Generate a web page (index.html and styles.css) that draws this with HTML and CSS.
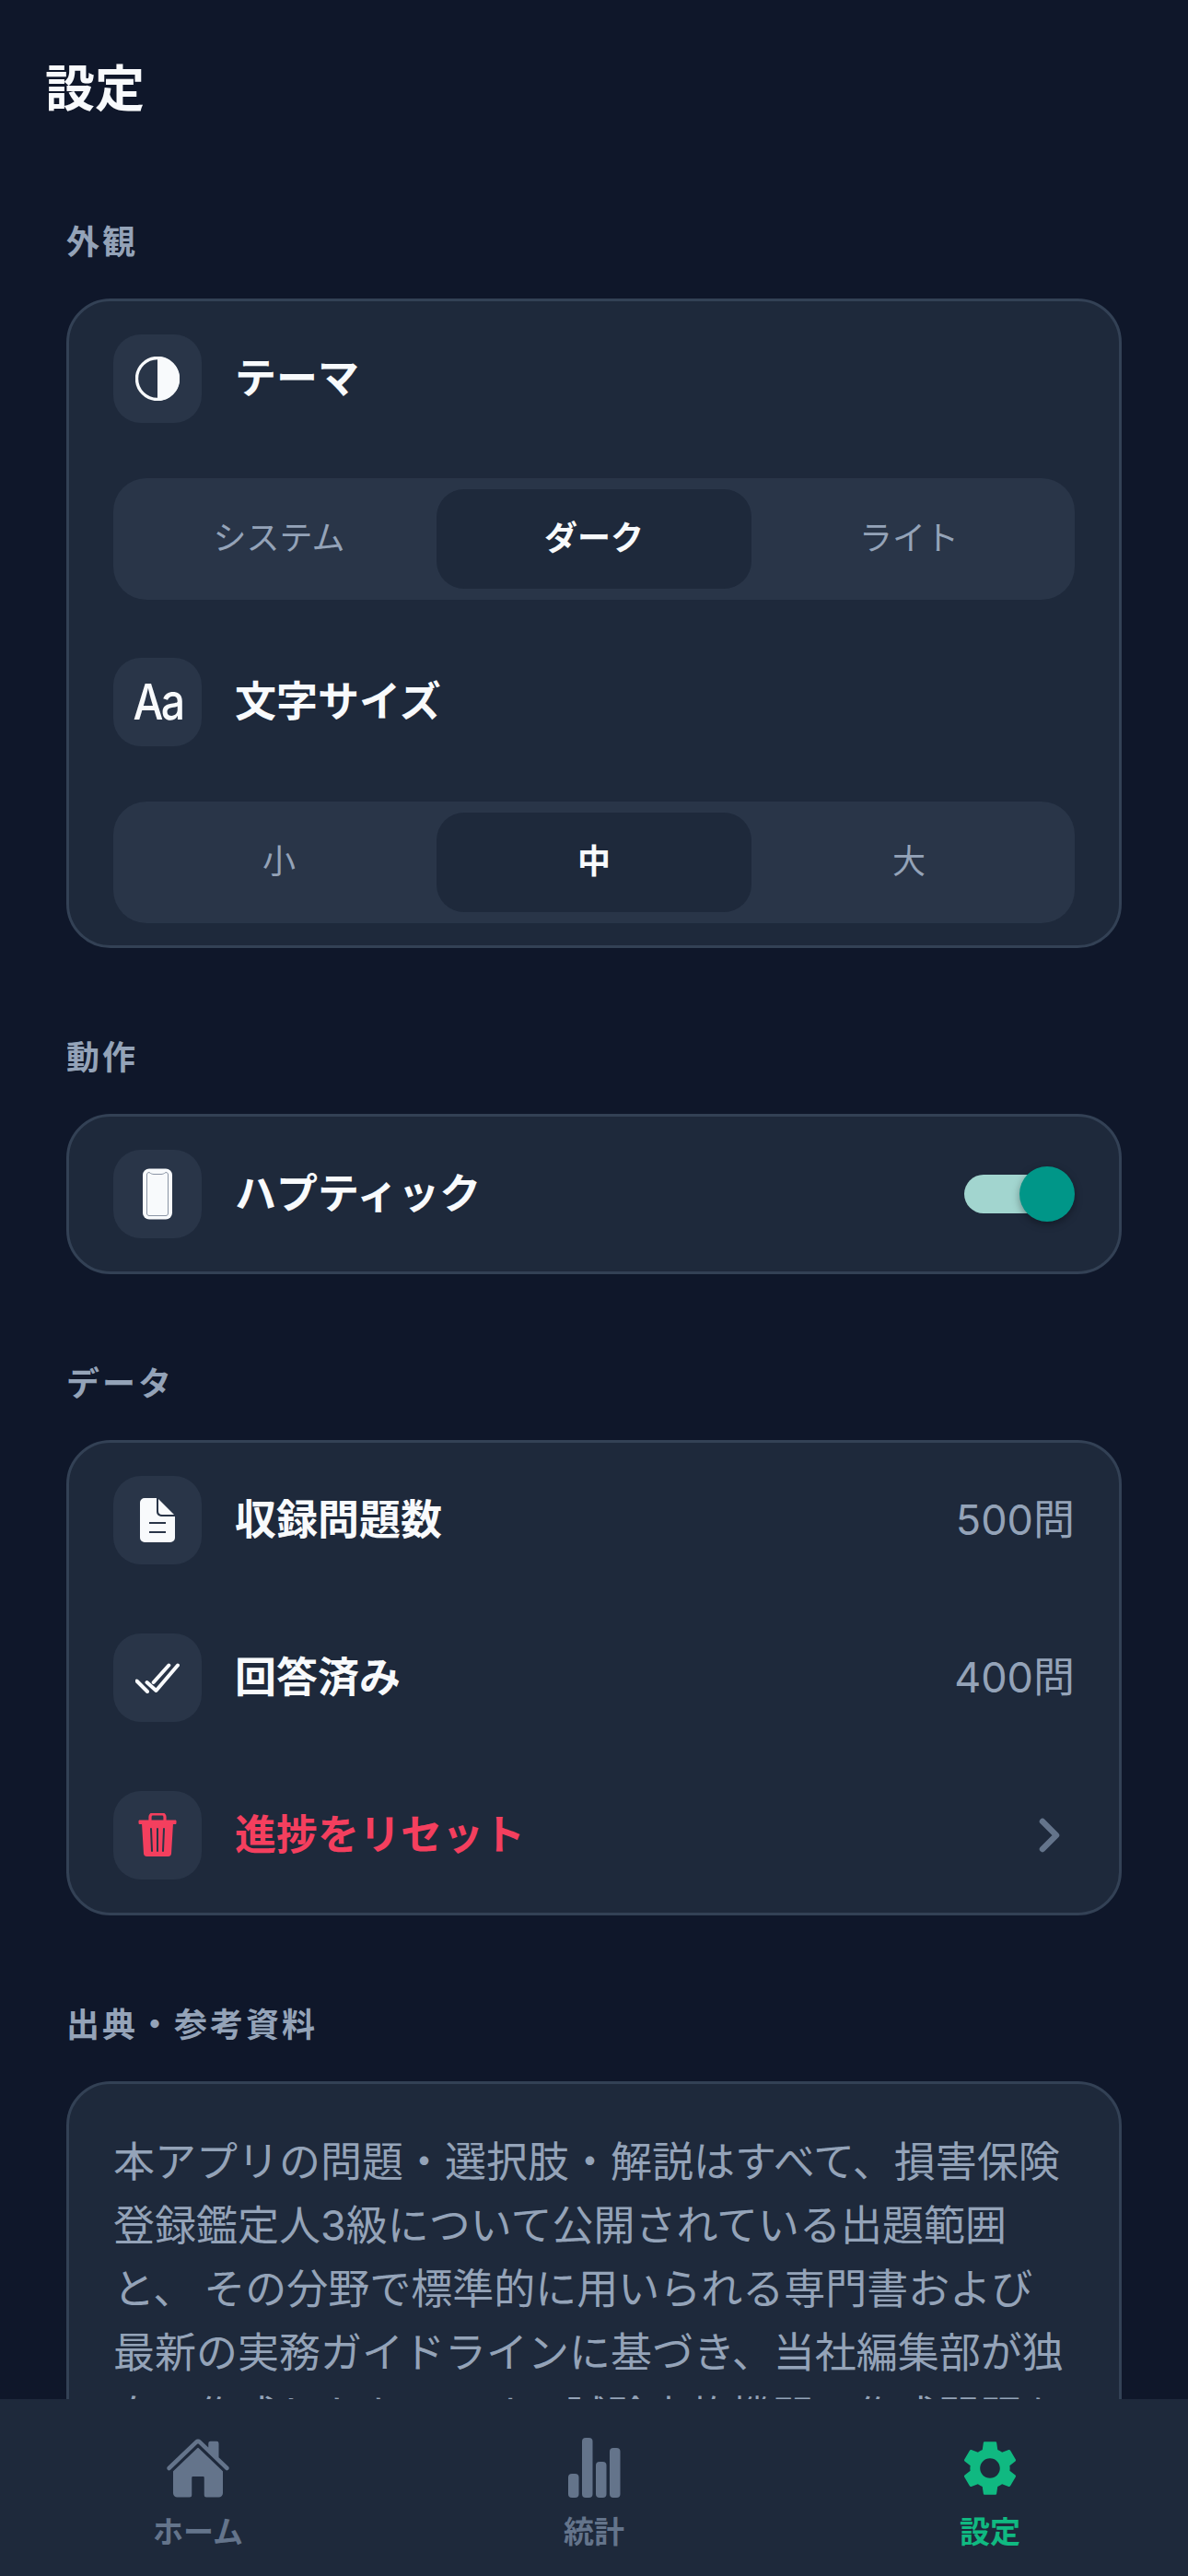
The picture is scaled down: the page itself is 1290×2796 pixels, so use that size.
FILE: index.html
```html
<!DOCTYPE html>
<html lang="ja">
<head>
<meta charset="utf-8">
<title>設定</title>
<link rel="stylesheet" href="styles.css">
</head>
<body>
<div class="app">
  <main class="screen">
    <h1 class="title">設定</h1>

    <section class="section">
      <h2 class="section-label">外観</h2>
      <div class="card card-appearance">
        <div class="row">
          <span class="icon-box">
            <svg class="icon" viewBox="0 0 48 48"><circle cx="24" cy="24" r="22.5" fill="none" stroke="#f8fafc" stroke-width="3.4"/><path d="M24 0a24 24 0 0 1 0 48z" fill="#f8fafc"/></svg>
          </span>
          <span class="row-label">テーマ</span>
        </div>
        <div class="segments">
          <span class="segment">システム</span>
          <span class="segment segment-on">ダーク</span>
          <span class="segment">ライト</span>
        </div>
        <div class="row row-after-segments">
          <span class="icon-box"><span class="icon-text">Aa</span></span>
          <span class="row-label">文字サイズ</span>
        </div>
        <div class="segments">
          <span class="segment">小</span>
          <span class="segment segment-on">中</span>
          <span class="segment">大</span>
        </div>
      </div>
    </section>

    <section class="section">
      <h2 class="section-label">動作</h2>
      <div class="card">
        <div class="row">
          <span class="icon-box">
            <svg class="icon icon-tall" viewBox="0 0 48 56"><rect x="8" y="0.5" width="32" height="55" rx="7" fill="#f8fafc"/><path d="M12.5 7c0-1.5 1-2.5 2.5-2.5 2 1.5 3.5 2 5 2h8c1.5 0 3-.5 5-2 1.5 0 2.5 1 2.500 2.500v42c0 1.500-1 2.500-2.500 2.500h-18c-1.500 0-2.500-1-2.500-2.500z" fill="none" stroke="#8b95a5" stroke-width="1"/></svg>
          </span>
          <span class="row-label">ハプティック</span>
          <span class="switch"><span class="switch-knob"></span></span>
        </div>
      </div>
    </section>

    <section class="section">
      <h2 class="section-label">データ</h2>
      <div class="card card-list">
        <div class="row">
          <span class="icon-box">
            <svg class="icon" viewBox="0 0 48 48"><path d="M5 5a5 5 0 0 1 5-5h13v15a5 5 0 0 0 5 5h15v23a5 5 0 0 1-5 5H10a5 5 0 0 1-5-5z" fill="#f8fafc"/><path d="M25 1l17 17H29a4 4 0 0 1-4-4z" fill="#f8fafc"/><path d="M15 27h18M15 37h18" stroke="#293548" stroke-width="2.2"/></svg>
          </span>
          <span class="row-label">収録問題数</span>
          <span class="row-value">500問</span>
        </div>
        <div class="row">
          <span class="icon-box">
            <svg class="icon" viewBox="0 0 48 48"><path d="M46 10.5 22.5 38 12.500 29M36.300 10.500 19.700 29M1.500 27.500 13 39" fill="none" stroke="#f8fafc" stroke-width="4" stroke-linecap="round" stroke-linejoin="round"/></svg>
          </span>
          <span class="row-label">回答済み</span>
          <span class="row-value">400問</span>
        </div>
        <div class="row">
          <span class="icon-box">
            <svg class="icon" viewBox="0 0 48 48"><path d="M4 8h40v3.5H4z" fill="#f43f5e" stroke="#f43f5e" stroke-linejoin="round"/><path d="M16 9V4a3 3 0 0 1 3-3h10a3 3 0 0 1 3 3v5" fill="none" stroke="#f43f5e" stroke-width="3.2"/><path d="M7 11h34l-2 33a3.5 3.5 0 0 1-3.5 3h-23a3.500 3.500 0 0 1-3.500-3z" fill="#f43f5e"/><path d="M17 17l1 24M24 17v24M31 17l-1 24" stroke="#293548" stroke-width="2" stroke-linecap="round"/></svg>
          </span>
          <span class="row-label row-label-danger">進捗をリセット</span>
          <svg class="chevron" viewBox="0 0 24 38"><path d="M4 4l15 15L4 34" fill="none" stroke="#64748b" stroke-width="6.5" stroke-linecap="round" stroke-linejoin="round"/></svg>
        </div>
      </div>
    </section>

    <section class="section">
      <h2 class="section-label">出典・参考資料</h2>
      <div class="card card-notes">
        <p class="notes">本アプリの問題・選択肢・解説はすべて、損害保険登録鑑定人3級について公開されている出題範囲と、 その分野で標準的に用いられる専門書および最新の実務ガイドラインに基づき、当社編集部が独自に作成したものです。試験実施機関の作成問題を転載したものではありません。</p>
      </div>
    </section>
  </main>

  <nav class="tabbar">
    <div class="tab">
      <svg class="tab-icon" viewBox="0 0 512 512"><path fill="#64748b" d="M261.560 101.280a8 8 0 0 0-11.060 0L66.400 277.150a8 8 0 0 0-2.470 5.790L63.900 448a32 32 0 0 0 32 32H192a16 16 0 0 0 16-16V328a8 8 0 0 1 8-8h80a8 8 0 0 1 8 8v136a16 16 0 0 0 16 16h96.060a32 32 0 0 0 32-32V282.940a8 8 0 0 0-2.470-5.790z"/><path fill="#64748b" d="M490.910 244.150l-74.800-71.560V64a16 16 0 0 0-16-16h-48a16 16 0 0 0-16 16v32l-57.920-55.380C272.770 35.140 264.710 32 256 32c-8.680 0-16.720 3.140-22.140 8.630l-212.700 203.500c-6.220 6-7 15.870-1.340 22.370A16 16 0 0 0 43 267.560L250.500 69.280a8 8 0 0 1 11.060 0l207.520 198.280a16 16 0 0 0 22.590-.44c6.140-6.360 5.630-16.860-.76-22.970z"/></svg>
      <span class="tab-label">ホーム</span>
    </div>
    <div class="tab">
      <svg class="tab-icon" viewBox="0 0 72 72"><g fill="#64748b"><rect x="8" y="42" width="11.500" height="26" rx="4"/><rect x="23" y="3" width="11.500" height="65" rx="4"/><rect x="38" y="29" width="11.500" height="39" rx="4"/><rect x="53" y="14" width="11.500" height="54" rx="4"/></g></svg>
      <span class="tab-label">統計</span>
    </div>
    <div class="tab tab-on">
      <svg class="tab-icon" viewBox="0 0 24 24"><path fill="#10b981" d="M19.140 12.940c.04-.3.06-.61.06-.94 0-.32-.02-.64-.07-.94l2.030-1.580c.18-.14.23-.41.12-.61l-1.920-3.320c-.12-.22-.37-.29-.59-.22l-2.390.96c-.5-.38-1.030-.7-1.620-.94l-.36-2.540c-.04-.24-.24-.41-.48-.41h-3.840c-.24 0-.43.17-.47.41l-.36 2.540c-.59.24-1.130.57-1.620.94l-2.390-.96c-.22-.08-.47 0-.59.22L2.740 8.870c-.12.21-.08.47.12.61l2.030 1.580c-.05.3-.09.63-.09.94s.02.64.07.94l-2.030 1.580c-.18.14-.23.41-.12.61l1.920 3.320c.12.22.37.29.59.22l2.390-.96c.5.38 1.030.7 1.620.94l.36 2.540c.05.24.24.41.48.41h3.840c.24 0 .44-.17.47-.41l.36-2.540c.59-.24 1.130-.56 1.620-.94l2.390.96c.22.08.47 0 .59-.22l1.920-3.320c.12-.22.07-.47-.12-.61l-2.010-1.580zM12 15.600c-1.980 0-3.600-1.620-3.600-3.600s1.620-3.600 3.600-3.600 3.600 1.620 3.600 3.600-1.620 3.600-3.600 3.600z"/></svg>
      <span class="tab-label">設定</span>
    </div>
  </nav>
</div>
</body>
</html>
```

FILE: styles.css
```css
* {
  box-sizing: border-box;
}

html,
body {
  margin: 0;
  height: 100%;
}

body {
  background: #0f172a;
  color: #f8fafc;
  font-family: "Inter", "Noto Sans CJK JP", "Noto Sans", sans-serif;
}

.app {
  display: flex;
  flex-direction: column;
  width: 1290px;
  height: 2796px;
  overflow: hidden;
}

.screen {
  flex: 1;
  min-height: 0;
  overflow: hidden;
  padding: 0 72px;
}

.title {
  margin: 0 0 0 -23px;
  padding-top: 58px;
  height: 222px;
  font-size: 54px;
  line-height: 78px;
  font-weight: 700;
}

.section {
  margin-bottom: 78px;
}

.section-label {
  margin: 0;
  height: 102px;
  font-size: 36px;
  line-height: 82px;
  font-weight: 700;
  letter-spacing: 3px;
  color: #94a3b8;
}

.card {
  padding: 36px 48px;
  background: #1e293b;
  border: 3px solid #334155;
  border-radius: 48px;
}

.card-appearance {
  padding-bottom: 24px;
}

.card-list {
  display: flex;
  flex-direction: column;
  gap: 75px;
}

.card-notes {
  padding: 50px 52px 48px 48px;
}

.row {
  display: flex;
  align-items: center;
  gap: 36px;
  height: 96px;
}

.row-after-segments {
  margin-top: 63px;
}

.icon-box {
  display: flex;
  flex: none;
  align-items: center;
  justify-content: center;
  width: 96px;
  height: 96px;
  background: #293548;
  border-radius: 30px;
}

.icon {
  display: block;
  width: 48px;
  height: 48px;
}

.icon-tall {
  height: 56px;
}

.icon-text {
  font-size: 54px;
  line-height: 96px;
  font-weight: 500;
  letter-spacing: -3px;
  color: #f8fafc;
  transform: scaleX(0.86);
}

.row-label {
  flex: 1;
  font-size: 45px;
  line-height: 66px;
  font-weight: 700;
}

.row-label-danger {
  color: #f43f5e;
}

.row-value {
  font-size: 45px;
  line-height: 66px;
  color: #94a3b8;
}

.chevron {
  display: block;
  flex: none;
  width: 24px;
  height: 38px;
  margin-right: 15px;
}

.segments {
  display: flex;
  height: 132px;
  margin-top: 60px;
  padding: 12px 9px;
  background: #293548;
  border-radius: 36px;
}

.segment {
  display: flex;
  flex: 1;
  align-items: center;
  justify-content: center;
  padding-bottom: 9px;
  border-radius: 30px;
  font-size: 36px;
  color: #94a3b8;
}

.segment-on {
  background: #1e293b;
  color: #f8fafc;
  font-weight: 700;
}

.switch {
  position: relative;
  flex: none;
  width: 108px;
  height: 42px;
  margin-right: 12px;
  background: #a2d5cf;
  border-radius: 21px;
}

.switch-knob {
  position: absolute;
  top: -9px;
  right: -12px;
  width: 60px;
  height: 60px;
  background: #009688;
  border-radius: 50%;
  box-shadow: 0 3px 9px rgba(0, 0, 0, 0.35);
}

.notes {
  margin: 0;
  font-size: 45px;
  line-height: 69px;
  word-spacing: -2.5px;
  color: #94a3b8;
}

.tabbar {
  display: grid;
  flex: none;
  grid-template-columns: repeat(3, 1fr);
  height: 192px;
  background: #1e293b;
}

.tab {
  display: flex;
  flex-direction: column;
  align-items: center;
  padding-top: 39px;
  color: #64748b;
}

.tab-icon {
  display: block;
  width: 72px;
  height: 72px;
}

.tab-label {
  margin-top: 9px;
  font-size: 33px;
  line-height: 48px;
  font-weight: 700;
}

.tab-on {
  color: #10b981;
}
```
